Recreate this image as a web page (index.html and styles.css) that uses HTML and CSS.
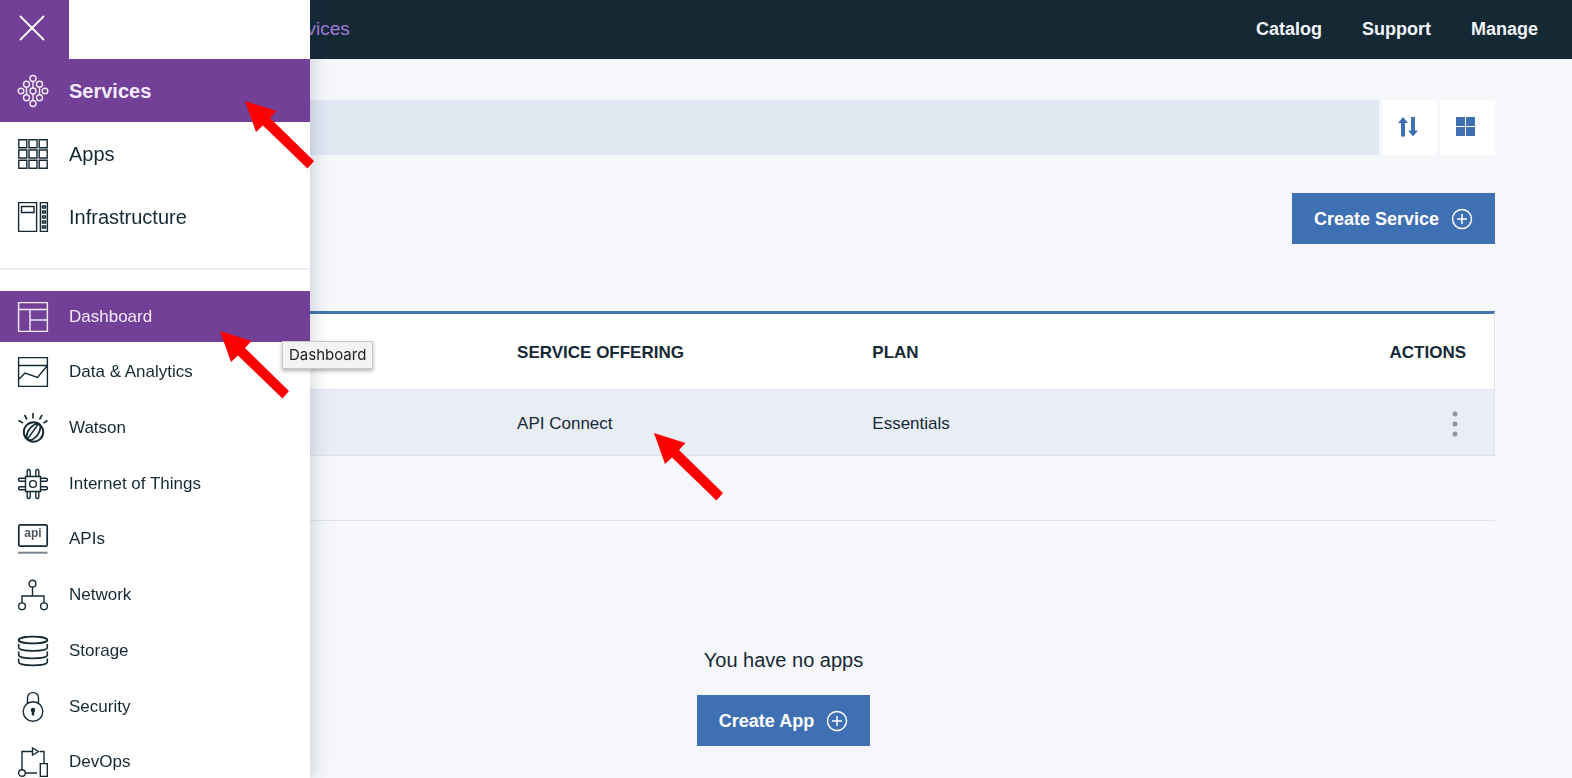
FILE: index.html
```html
<!DOCTYPE html>
<html lang="en">
<head>
<meta charset="utf-8">
<meta name="viewport" content="width=device-width, initial-scale=1">
<title>Services</title>
<link rel="stylesheet" href="styles.css">
</head>
<body>
<header class="topbar">
  <a class="crumb" href="#">Services</a>
  <nav class="topnav" aria-label="Global">
    <a href="#">Catalog</a>
    <a href="#">Support</a>
    <a href="#">Manage</a>
  </nav>
</header>

<main class="content">
  <div class="toolbar">
    <input class="filter" type="search" aria-label="Filter services">
    <button class="tool" type="button" aria-label="Sort">
      <svg width="20" height="20" viewBox="0 0 20 20" fill="currentColor"><path d="M5 0l5 6H7v13.500H3V6H0zM13 0h4v13.500h3l-5 6-5-6h3z"/></svg>
    </button>
    <button class="tool" type="button" aria-label="Grid view">
      <svg width="20" height="20" viewBox="0 0 20 20" fill="currentColor"><path d="M0 0h9v9H0zM10 0h9v9h-9zM0 10h9v9H0zM10 10h9v9h-9z"/></svg>
    </button>
  </div>

  <div class="create-row">
    <button class="primary" type="button">Create Service
      <svg width="22" height="22" viewBox="0 0 22 22" fill="none" stroke="currentColor" stroke-width="1.5"><circle cx="11" cy="11" r="9.5"/><path d="M11 6v10M6 11h10"/></svg>
    </button>
  </div>

  <table class="services">
    <thead>
      <tr><th class="col-name"></th><th class="col-offering">Service Offering</th><th class="col-plan">Plan</th><th class="col-actions">Actions</th></tr>
    </thead>
    <tbody>
      <tr><td></td><td>API Connect</td><td>Essentials</td>
        <td class="col-actions"><button class="more" type="button" aria-label="More actions">
          <svg width="6" height="26" viewBox="0 0 6 26" fill="currentColor"><circle cx="3" cy="3" r="2.5"/><circle cx="3" cy="13" r="2.5"/><circle cx="3" cy="23" r="2.5"/></svg>
        </button></td></tr>
    </tbody>
  </table>

  <section class="apps">
    <p class="empty">You have no apps</p>
    <button class="primary" type="button">Create App
      <svg width="22" height="22" viewBox="0 0 22 22" fill="none" stroke="currentColor" stroke-width="1.5"><circle cx="11" cy="11" r="9.5"/><path d="M11 6v10M6 11h10"/></svg>
    </button>
  </section>
</main>

<aside class="drawer">
  <button class="close" type="button" aria-label="Close menu">
    <svg width="26" height="26" viewBox="0 0 26 26" fill="none" stroke="currentColor" stroke-width="1.8"><path d="M1 1l24 24M25 1L1 25"/></svg>
  </button>
  <nav aria-label="Main">
    <ul class="menu menu-large">
      <li><a class="active strong" href="#">
        <svg class="icon" viewBox="0 0 30 30"><circle cx="15" cy="2.500" r="3"/><circle cx="15" cy="15" r="3"/><circle cx="15" cy="27.500" r="3"/><circle cx="3" cy="15" r="2.800"/><circle cx="27" cy="15" r="2.800"/><circle cx="8.500" cy="8.300" r="3"/><circle cx="21.500" cy="8.300" r="3"/><circle cx="8.500" cy="21.700" r="3"/><circle cx="21.500" cy="21.700" r="3"/><path d="M15 5.500V12M15 18v6.500M8.500 11.300v7.400M21.500 11.300v7.400"/></svg>
        Services</a></li>
      <li><a href="#">
        <svg class="icon" viewBox="0 0 30 30"><path d="M.8.8h8v8h-8zM11 .8h8v8h-8zM21.2.8h8v8h-8zM.8 11h8v8h-8zM11 11h8v8h-8zM21.200 11h8v8h-8zM.8 21.200h8v8h-8zM11 21.200h8v8h-8zM21.200 21.200h8v8h-8z"/></svg>
        Apps</a></li>
      <li><a href="#">
        <svg class="icon" viewBox="0 0 30 30"><path d="M.6.6h18v28.8H.6zM3.500 4.500h12.500v6H3.500zM22.400.6h7v28.800h-7z"/><path d="M24.500 4h3v2h-3zM24.500 9h3v2h-3zM24.500 14h3v2h-3zM24.500 19h3v2h-3zM24.500 24h3v2h-3z"/></svg>
        Infrastructure</a></li>
    </ul>
    <ul class="menu menu-small">
      <li><a class="active" href="#" aria-describedby="tip">
        <svg class="icon" viewBox="0 0 30 30"><path d="M.6.6h28.8v28.8H.6zM.6 7.500h28.800M12 7.500v21.900M12 18h17.400"/></svg>
        Dashboard</a></li>
      <li><a href="#">
        <svg class="icon" viewBox="0 0 30 30"><path d="M.6.6h28.8v28.8H.6zM.6 8.500h28.800M.6 22.500L7 16l12.500 4.500L29.400 8.500"/></svg>
        Data &amp; Analytics</a></li>
      <li><a href="#">
        <svg class="icon" viewBox="0 0 30 30"><circle cx="15.500" cy="19" r="9.700" stroke-width="2"/><ellipse cx="15.500" cy="19" rx="5" ry="9.500" stroke-width="1.800" transform="rotate(36 15.500 19)"/><path d="M9.500 26L20 11.500"/><path d="M15 0v5.500M6.500 2l2.500 4.500M24 2l-2.500 4.500M.500 7.500L5 10M29.500 7.500L25.500 10" stroke-width="1.600"/></svg>
        Watson</a></li>
      <li><a href="#">
        <svg class="icon" viewBox="0 0 30 30"><path d="M7.500 7.500h15v15h-15z"/><circle cx="15" cy="15" r="3.400"/><path d="M9.200 7V2q0-1.500 1.500-1.500T12.200 2v5M17.800 7V2q0-1.500 1.500-1.500T20.800 2v5M9.200 23v5q0 1.500 1.500 1.500t1.500-1.500v-5M17.800 23v5q0 1.500 1.500 1.500t1.500-1.500v-5M7 9.200H2Q.500 9.200.500 10.700T2 12.200h5M7 17.800H2q-1.500 0-1.500 1.500T2 20.800h5M23 9.200h5q1.500 0 1.500 1.500T28 12.200h-5M23 17.800h5q1.500 0 1.500 1.500T28 20.800h-5"/></svg>
        Internet of Things</a></li>
      <li><a href="#">
        <svg class="icon" viewBox="0 0 30 30"><rect x=".800" y=".800" width="28.400" height="21.400" rx="1.500" stroke-width="1.700"/><path class="base" d="M0 28.700h29.500"/><text class="api" x="15" y="13" aria-hidden="true">api</text></svg>
        APIs</a></li>
      <li><a href="#">
        <svg class="icon" viewBox="0 0 30 30"><circle cx="14.500" cy="3.700" r="3.400"/><circle cx="4" cy="26.300" r="3.400"/><circle cx="26" cy="26.300" r="3.400"/><path d="M14.500 7v9M4 23v-7h22v7"/></svg>
        Network</a></li>
      <li><a href="#">
        <svg class="icon" viewBox="0 0 30 30"><ellipse cx="15" cy="4" rx="14.300" ry="3.400" stroke-width="1.900"/><path d="M.700 8v3.500c0 4.500 28.600 4.500 28.600 0V8M.700 15.500V19c0 4.500 28.600 4.500 28.600 0v-3.500M.700 22.500V26c0 4.500 28.600 4.500 28.600 0v-3.500" stroke-width="1.600"/></svg>
        Storage</a></li>
      <li><a href="#">
        <svg class="icon" viewBox="0 0 30 30"><circle cx="15" cy="19.500" r="9.800"/><path d="M9.500 11.500V6q0-5.400 5.500-5.400T20.500 6v5.500"/><path d="M15 18v5.500" stroke-width="2.500"/><circle cx="15" cy="18" r="1.500" fill="currentColor"/></svg>
        Security</a></li>
      <li><a href="#">
        <svg class="icon" viewBox="0 0 30 30"><circle cx="4" cy="26" r="3.300"/><path d="M4 22.500V4.500h10M7.300 26H19M14.500 1v7l6-3.500zM22 4.500h4V16M22.300 16.600h7v12.800h-7z"/></svg>
        DevOps</a></li>
    </ul>
  </nav>
</aside>

<div class="tooltip" id="tip" role="tooltip">Dashboard</div>

<svg class="pointer pointer-services" viewBox="0 0 69 68" aria-hidden="true"><path d="M0 0L31.500 10L25 17L69 60L62.500 67.500L18 24.500L11 31z"/></svg>
<svg class="pointer pointer-dashboard" viewBox="0 0 69 68" aria-hidden="true"><path d="M0 0L31.500 10L25 17L69 60L62.500 67.500L18 24.500L11 31z"/></svg>
<svg class="pointer pointer-offering" viewBox="0 0 69 68" aria-hidden="true"><path d="M0 0L31.500 10L25 17L69 60L62.500 67.500L18 24.500L11 31z"/></svg>
</body>
</html>
```
FILE: styles.css
```css
* { box-sizing: border-box; }

body {
  margin: 0;
  min-height: 100vh;
  background: #f5f7fb;
  color: #152935;
  font: 17px/20px "Liberation Sans", Arial, sans-serif;
}

a { color: inherit; text-decoration: none; }

button {
  border: 0;
  padding: 0;
  font: inherit;
  color: inherit;
  cursor: pointer;
}

svg { display: block; flex: none; }

/* Top bar */
.topbar {
  display: flex;
  align-items: center;
  justify-content: space-between;
  height: 59px;
  padding: 0 34px 2px 277px;
  background: #152935;
  color: #fff;
}

.crumb { color: #a57bdc; font-size: 19px; }

.topnav {
  display: flex;
  gap: 40px;
  font-size: 18px;
  font-weight: bold;
  color: #f2f5fa;
}

/* Page content */
.content { padding: 41px 77px 0 72px; }

.toolbar { display: flex; gap: 3px; }

.filter {
  flex: 1;
  height: 55px;
  padding: 0 16px;
  border: 0;
  border-radius: 0;
  background: #e1e8f2;
  font: inherit;
}

.tool {
  display: grid;
  place-items: center;
  width: 55px;
  height: 55px;
  padding: 0 3px 2px 0;
  background: #fff;
  color: #3f70b3;
}

.create-row {
  display: flex;
  justify-content: flex-end;
  padding: 38px 0 67px;
}

.primary {
  display: inline-flex;
  align-items: center;
  gap: 12px;
  height: 51px;
  padding: 0 22px;
  background: #3f70b3;
  color: #fff;
  font-size: 18px;
  font-weight: bold;
}

.services {
  width: 100%;
  table-layout: fixed;
  border-collapse: separate;
  border-spacing: 0;
  border: 1px solid #dfe3e9;
  border-top: 3px solid #4476ab;
  background: #fff;
  text-align: left;
}

.services th {
  height: 75px;
  padding: 2px 28px 0 32px;
  text-transform: uppercase;
}

.services td {
  height: 66px;
  padding: 2px 28px 0 32px;
  border-top: 1px solid #dfe3e9;
  background: #e9eef6;
}

.col-name { width: 29%; }
.col-offering, .col-plan { width: 25%; }
.services .col-actions { text-align: right; }

.more {
  padding: 0 8px;
  background: none;
  color: #8c97a5;
  vertical-align: middle;
}

.apps {
  display: flex;
  flex-direction: column;
  align-items: center;
  gap: 25px;
  margin-top: 64px;
  padding-top: 129px;
  border-top: 1px solid #dfe3e9;
}

.empty { margin: 0; font-size: 20px; }

/* Navigation drawer */
.drawer {
  position: fixed;
  top: 0;
  bottom: 0;
  left: 0;
  width: 310px;
  overflow: hidden;
  background: #fff;
  box-shadow: 2px 0 18px rgba(30, 40, 70, 0.2);
}

.close {
  display: grid;
  place-items: center;
  width: 69px;
  height: 59px;
  padding: 0 6px 3px 0;
  background: #734098;
  color: #fff;
}

.menu { margin: 0; padding: 0; list-style: none; }

.menu a {
  display: flex;
  align-items: center;
  gap: 21px;
  padding-left: 18px;
}

.menu-large { padding-bottom: 20px; border-bottom: 2px solid #eef0f3; }
.menu-large a { height: 63px; font-size: 20px; }

.menu-small { padding-top: 21px; }
.menu-small a { height: 56px; }
.menu-small li:nth-child(4n) a { height: 55px; }
.menu-small li a.active { height: 51px; margin-bottom: 2px; }

.menu .active { background: #734098; color: #f3ebfa; }
.menu .strong { font-weight: bold; }

.icon {
  width: 30px;
  height: 30px;
  overflow: visible;
  fill: none;
  stroke: currentColor;
  stroke-width: 1.4;
}

.icon .base { stroke: #7b858e; stroke-width: 2; }

.icon .api {
  fill: #4a5762;
  stroke: none;
  font-size: 12px;
  font-weight: bold;
  text-anchor: middle;
}

/* Overlays */
.tooltip {
  position: absolute;
  top: 341px;
  left: 282px;
  padding: 3px 6px;
  border: 1px solid #c9c9c9;
  background: #f3f3f3;
  color: #222;
  font: 15px/20px Inter, sans-serif;
  box-shadow: 0 2px 4px rgba(0, 0, 0, 0.3);
}

.pointer {
  position: absolute;
  width: 69px;
  height: 68px;
  fill: #f00;
}

.pointer-services { top: 101px; left: 245px; }
.pointer-dashboard { top: 331px; left: 220px; }
.pointer-offering { top: 433px; left: 654px; }
```
